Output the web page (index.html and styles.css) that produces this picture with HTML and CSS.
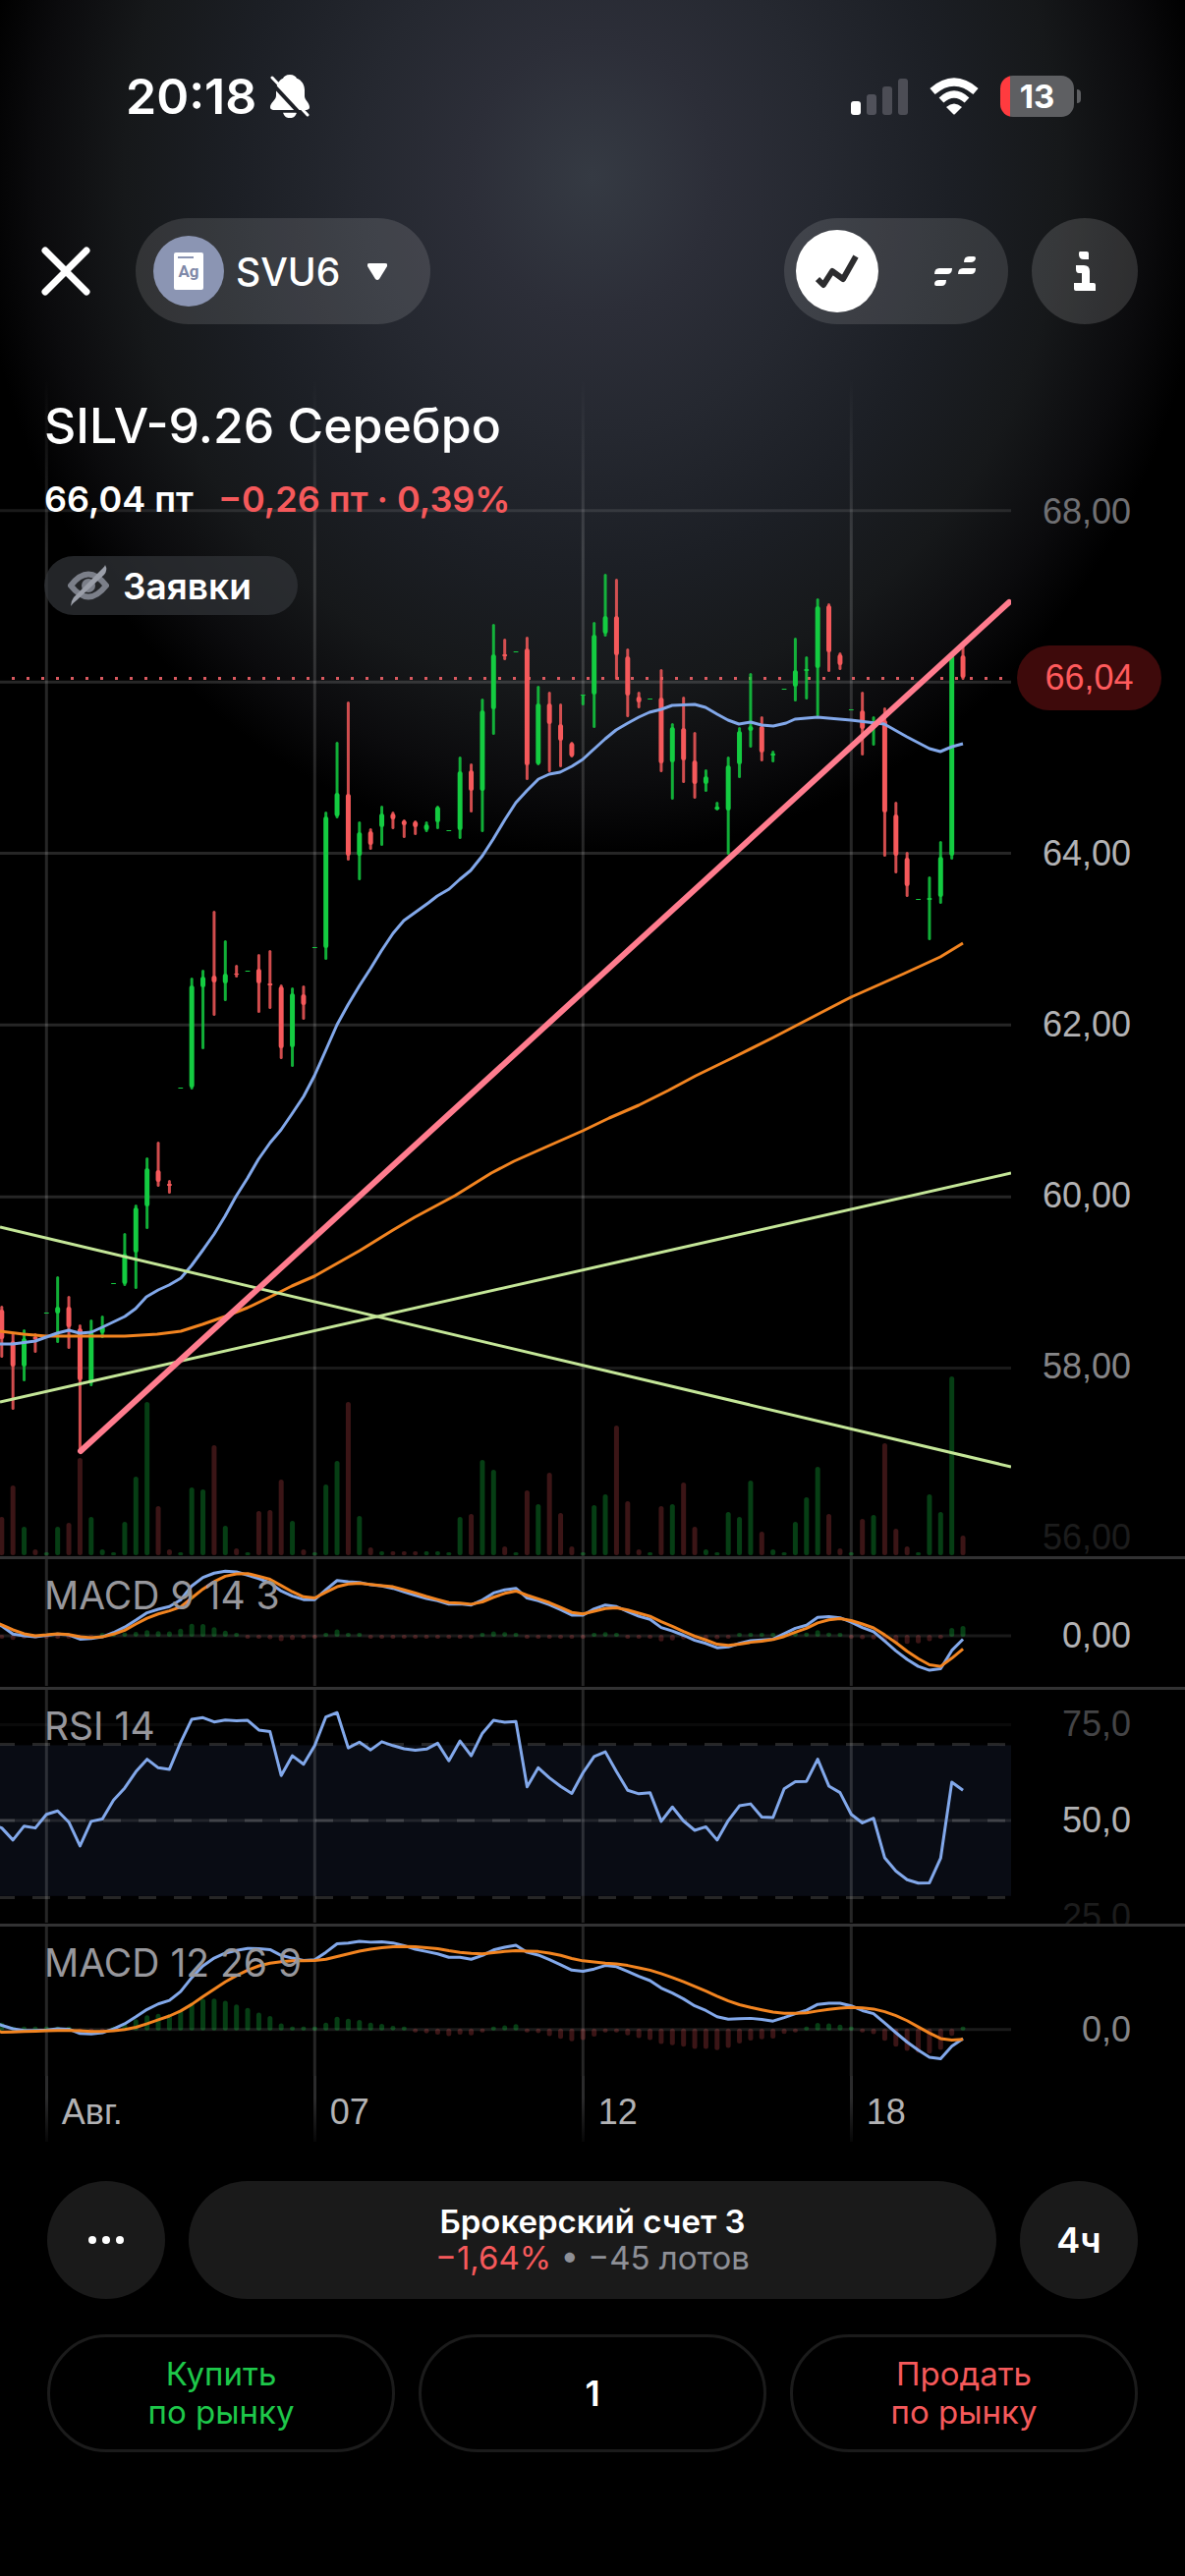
FILE: index.html
```html
<!DOCTYPE html>
<html lang="ru">
<head>
    <meta charset="UTF-8">
    <meta name="viewport" content="width=device-width, initial-scale=1.0">
    <title>SILV-9.26 Серебро</title>
    <link rel="stylesheet" href="styles.css">
</head>
<body>
    <div class="status-bar">
        <div class="status-left">
            <span class="time">20:18</span>
            <svg width="40" height="44" viewBox="0 0 40 44">
                <path d="M20 0c4 0 6 2 7 4 5 2 8 7 8 13v7c0 4 5 7 5 12 0 2-1 3-3 3H3c-2 0-3-1-3-3 0-5 6-8 6-13v-6C6 11 9 6 13 4c1-2 3-4 7-4zM13 42h14q-2 6-7 6t-7-6z" transform="scale(1 .92)" fill="#fff"/>
                <path d="M-1 6L38 48" stroke="#1d1f25" stroke-width="4"/>
                <path d="M2 3L38 41" stroke="#fff" stroke-width="3" stroke-linecap="round"/>
            </svg>
        </div>
        <div class="status-right">
            <svg width="58" height="38" viewBox="0 0 58 38">
                <rect x="0" y="24" width="10" height="14" rx="3" fill="#fff"/>
                <rect x="16" y="17" width="10" height="21" rx="3" fill="#50515a"/>
                <rect x="32" y="9" width="10" height="29" rx="3" fill="#4c4d55"/>
                <rect x="48" y="1" width="10" height="37" rx="3" fill="#4c4d55"/>
            </svg>
            <svg width="50" height="38" viewBox="0 0 50 38">
                <path d="M3 14Q25 -5 47 14" fill="none" stroke="#fff" stroke-width="8"/>
                <path d="M12 23Q25 11 38 23" fill="none" stroke="#fff" stroke-width="7"/>
                <path d="M17 30Q25 23 33 30L26 37q-1 1-2 0z" fill="#fff"/>
            </svg>
            <div class="battery"><span>13</span></div>
        </div>
    </div>

    <header class="header">
        <button class="close" aria-label="Закрыть">
            <svg width="50" height="50" viewBox="0 0 50 50">
                <path d="M4 4L46 46M46 4L4 46" stroke="#fff" stroke-width="7" stroke-linecap="round"/>
            </svg>
        </button>
        <button class="ticker">
            <span class="ticker-icon">
                <svg width="30" height="38" viewBox="0 0 30 38">
                    <rect width="30" height="38" rx="2" fill="#fff"/>
                    <rect x="4" y="4" width="16" height="2" fill="#8b95b3"/>
                    <text x="15" y="25" class="ag">Ag</text>
                </svg>
            </span>
            SVU6
            <svg class="caret" width="20" height="17" viewBox="0 0 20 17">
                <path d="M2 0h16q3 0 2 3l-8 13q-2 2-4 0L0 3Q-1 0 2 0z" fill="#fff"/>
            </svg>
        </button>
        <div class="switcher">
            <button class="switch active" aria-label="График">
                <svg width="44" height="36" viewBox="0 0 44 36">
                    <path d="M2 26L8 32L17 18L28 26L41 3" fill="none" stroke="#2c2c2e" stroke-width="6" stroke-linejoin="round"/>
                </svg>
            </button>
            <button class="switch" aria-label="Стакан">
                <svg width="42" height="30" viewBox="0 0 42 30" fill="#fff">
                    <path d="M35 0h5q2 0 2 2-1 4-5 4h-7q0-6 5-6z"/>
                    <path d="M5 12h13q0 6-5 6H0q0-6 5-6z"/>
                    <path d="M29 12h13q0 6-5 6H24q0-6 5-6z"/>
                    <path d="M5 24h7q0 6-5 6H2q-2 0-2-2 0-4 5-4z"/>
                </svg>
            </button>
        </div>
        <button class="info" aria-label="Информация">
            <svg width="22" height="40" viewBox="0 0 22 40" fill="#fff">
                <path d="M6 0h7q2 0 2 2v6h-5q-5 0-5-5V2q0-2 1-2z"/>
                <path d="M2 14h8q6 0 6 6v12h4q2 0 2 2v6H2q-2 0-2-2v-6h8V22H5q-3 0-3-4z"/>
            </svg>
        </button>
    </header>

    <main class="chart">
        <section class="pane pane-main">
            <svg class="plot" id="price" viewBox="0 380 1029 1204" preserveAspectRatio="none"></svg>
            <div class="summary">
                <h1>SILV-9.26 Серебро</h1>
                <p class="quote">66,04 пт <span class="down">−0,26 пт · 0,39%</span></p>
                <button class="orders">
                    <svg width="42" height="42" viewBox="0 0 42 42">
                        <path d="M3 21Q21 -2 39 21Q21 44 3 21z" fill="none" stroke="#7b7f89" stroke-width="6"/>
                        <circle cx="21" cy="21" r="7" fill="#7b7f89"/>
                        <path d="M3 42q0-5 3-9L36 3q2-2 2-3 3 5-1 10L9 36q-4 3-6 6z" fill="#9a9ea8"/>
                    </svg>
                    Заявки
                </button>
            </div>
            <div class="axis">
                <span class="dim">68,00</span>
                <span>66,00</span>
                <span>64,00</span>
                <span>62,00</span>
                <span>60,00</span>
                <span class="soft">58,00</span>
                <span class="faint">56,00</span>
            </div>
            <div class="badge">66,04</div>
        </section>
        <section class="pane pane-macd">
            <svg class="plot" id="macdFast" viewBox="0 1587 1029 130" preserveAspectRatio="none"></svg>
            <h2>MACD 9 14 3</h2>
            <div class="axis"><span>0,00</span></div>
        </section>
        <section class="pane pane-rsi">
            <svg class="plot" id="rsi" viewBox="0 1720 1029 238" preserveAspectRatio="none"></svg>
            <h2>RSI 14</h2>
            <div class="axis">
                <span class="dark">75,0</span>
                <span>50,0</span>
                <span class="faint">25,0</span>
            </div>
        </section>
        <section class="pane pane-macd-slow">
            <svg class="plot" id="macdSlow" viewBox="0 1961 1029 152" preserveAspectRatio="none"></svg>
            <h2>MACD 12 26 9</h2>
            <div class="axis"><span class="soft">0,0</span></div>
        </section>
        <div class="dates">
            <span>Авг.</span>
            <span>07</span>
            <span>12</span>
            <span>18</span>
        </div>
    </main>

    <footer class="footer">
        <div class="account-row">
            <button class="round" aria-label="Ещё">
                <svg width="36" height="8" viewBox="0 0 36 8" fill="#fff">
                    <circle cx="4" cy="4" r="4"/>
                    <circle cx="18" cy="4" r="4"/>
                    <circle cx="32" cy="4" r="4"/>
                </svg>
            </button>
            <button class="account">
                <b>Брокерский счет 3</b>
                <span class="position"><span class="down">−1,64%</span> • −45 лотов</span>
            </button>
            <button class="round">4ч</button>
        </div>
        <div class="trade-row">
            <button class="trade buy">Купить<br>по рынку</button>
            <input class="trade amount" type="text" inputmode="numeric" value="1" aria-label="Количество лотов">
            <button class="trade sell">Продать<br>по рынку</button>
        </div>
    </footer>
    <script src="script.js"></script>
</body>
</html>
```
FILE: styles.css
```css
* {
    box-sizing: border-box;
}

body {
    margin: 0;
    min-height: 100vh;
    background: #000 radial-gradient(ellipse 52% 690px at 50% 180px, #353a43 0%, #2c2e38 20%, #252830 38%, #1c1f25 58%, #16181a 76%, #0b0b0d 90%, #000 100%) no-repeat;
    color: #fff;
    font-family: Inter, "Liberation Sans", sans-serif;
}

button,
input {
    margin: 0;
    padding: 0;
    border: none;
    background: none;
    color: inherit;
    font-family: inherit;
    cursor: pointer;
}

h1,
h2,
p {
    margin: 0;
}

.down {
    color: #f5595b;
}

/* status bar */

.status-bar {
    display: flex;
    justify-content: space-between;
    align-items: center;
    height: 196px;
    padding: 0 106px 0 128px;
}

.status-left,
.status-right {
    display: flex;
    align-items: center;
}

.status-left {
    gap: 14px;
}

.status-right {
    gap: 22px;
}

.time {
    font-size: 50px;
    font-weight: 600;
}

.battery {
    position: relative;
    width: 75px;
    height: 42px;
    margin-right: 7px;
    border-radius: 13px;
    background: linear-gradient(to right, #ff3b3f 10px, #5e5f62 10px);
    font-size: 33px;
    font-weight: 700;
    line-height: 42px;
    text-align: center;
}

.battery::after {
    content: "";
    position: absolute;
    left: 78px;
    top: 14px;
    width: 4px;
    height: 14px;
    border-radius: 0 4px 4px 0;
    background: #5e5f62;
}

/* header */

.header {
    display: flex;
    align-items: center;
    height: 108px;
    margin: 26px 48px 50px 42px;
}

.close {
    height: 50px;
    margin-right: 46px;
}

.ticker {
    display: flex;
    align-items: center;
    width: 300px;
    height: 108px;
    margin-right: auto;
    padding: 0 18px;
    border-radius: 54px;
    background: rgba(255, 255, 255, 0.12);
    font-size: 39px;
    font-weight: 500;
}

.ticker-icon {
    display: flex;
    align-items: center;
    justify-content: center;
    width: 72px;
    height: 72px;
    margin-right: 12px;
    border-radius: 50%;
    background: #8b95b3;
}

.ag {
    font-family: Roboto, sans-serif;
    font-size: 17px;
    font-weight: 700;
    text-anchor: middle;
    fill: #7f89a8;
}

.caret {
    margin-left: 28px;
}

.switcher {
    display: flex;
    align-items: center;
    width: 228px;
    height: 108px;
    margin-right: 24px;
    padding: 0 12px;
    gap: 36px;
    border-radius: 54px;
    background: rgba(255, 255, 255, 0.12);
}

.switch,
.info {
    display: flex;
    align-items: center;
    justify-content: center;
    width: 84px;
    height: 84px;
    border-radius: 50%;
}

.switch.active {
    background: #fff;
}

.info {
    width: 108px;
    height: 108px;
    background: rgba(255, 255, 255, 0.14);
}

/* chart */

.pane {
    position: relative;
    display: grid;
    grid-template-columns: 1fr 177px;
    border-bottom: 3px solid #323233;
    overflow: hidden;
}

.pane-main {
    height: 1207px;
}

.pane-macd {
    height: 133px;
}

.pane-rsi {
    height: 241px;
}

.pane-macd-slow {
    height: 152px;
    border-bottom: none;
}

.plot,
.summary,
.pane h2 {
    grid-area: 1 / 1;
}

.plot {
    display: block;
    width: 100%;
    height: 100%;
    min-height: 0;
}

.summary {
    padding: 22px 0 0 45px;
}

.summary h1 {
    font-size: 50px;
    font-weight: 500;
    line-height: 62px;
}

.quote {
    margin-top: 22px;
    font-size: 36px;
    font-weight: 600;
    line-height: 44px;
}

.quote .down {
    margin-left: 16px;
}

.orders {
    display: flex;
    align-items: center;
    width: 258px;
    height: 60px;
    margin-top: 36px;
    padding-left: 24px;
    gap: 14px;
    border-radius: 30px;
    background: rgba(50, 52, 57, 0.7);
    font-size: 37px;
    font-weight: 600;
}

.pane h2 {
    padding: 17px 0 0 45px;
    color: #97979c;
    font-size: 39px;
    font-weight: 400;
    line-height: 40px;
}

.axis {
    grid-area: 1 / 2;
    display: flex;
    flex-direction: column;
    gap: 58px;
    min-height: 0;
    padding-right: 55px;
    color: #b2b2b4;
    font-family: "Liberation Sans", sans-serif;
    font-size: 36px;
    line-height: 40px;
    text-align: right;
}

.pane-main .axis {
    gap: 134px;
    padding-top: 121px;
}

.pane-macd .axis {
    padding-top: 58px;
}

.pane-rsi .axis {
    padding-top: 15px;
}

.pane-macd-slow .axis {
    padding-top: 85px;
}

.axis .dim {
    color: #707073;
}

.axis .soft {
    color: #858587;
}

.axis .dark {
    color: #444446;
}

.axis .faint {
    color: #1c1c1c;
}

.badge {
    position: absolute;
    right: 24px;
    top: 277px;
    width: 147px;
    height: 66px;
    border-radius: 33px;
    background: #3e0a0b;
    color: #ff5a5c;
    font-family: "Liberation Sans", sans-serif;
    font-size: 36px;
    line-height: 66px;
    text-align: center;
}

.dates {
    display: grid;
    grid-template-columns: 4.45% repeat(3, 26.53%) 1fr;
    height: 67px;
    margin-right: 177px;
    overflow: hidden;
    color: #b2b2b4;
    font-family: "Liberation Sans", sans-serif;
    font-size: 36px;
    line-height: 74px;
}

.dates::before {
    content: "";
}

.dates span {
    padding-left: 17px;
    background: linear-gradient(#2b2b2c 30%, #000) left / 3px 100% no-repeat;
}

/* chart series */

.grid {
    stroke: #fff;
    stroke-opacity: 0.15;
    stroke-width: 3;
}

.grid.weak {
    stroke-opacity: 0.1;
}

.grid.ghost {
    stroke-opacity: 0.04;
}

.up-bar {
    fill: #14cc41;
}

.down-bar {
    fill: #f5595b;
}

.wick {
    fill-opacity: 0.85;
}

.volume {
    fill-opacity: 0.3;
}

.volume.down-bar {
    fill-opacity: 0.24;
}

.line {
    fill: none;
    stroke-width: 3;
    stroke-linejoin: round;
}

.blue {
    stroke: #82a8ea;
}

.orange {
    stroke: #f28420;
}

.green {
    stroke: #c4e698;
}

.trend {
    stroke: #ff7c8e;
    stroke-width: 6;
    stroke-linecap: round;
}

.last-price {
    stroke: #d9595f;
    stroke-width: 3;
    stroke-dasharray: 3 12;
}

.band {
    fill: #090c14;
}

.level {
    stroke: #fff;
    stroke-opacity: 0.15;
    stroke-width: 3;
    stroke-dasharray: 18 18;
}

/* footer */

.footer {
    display: flex;
    flex-direction: column;
    gap: 36px;
    padding: 40px 48px 126px;
}

.account-row,
.trade-row {
    display: flex;
    gap: 24px;
}

.round {
    display: flex;
    align-items: center;
    justify-content: center;
    width: 120px;
    height: 120px;
    border-radius: 50%;
    background: #1a1a1a;
    font-size: 36px;
    font-weight: 600;
}

.account {
    display: flex;
    flex: 1;
    flex-direction: column;
    justify-content: center;
    height: 120px;
    border-radius: 60px;
    background: #1a1a1a;
    font-size: 33px;
    line-height: 37px;
}

.account b {
    font-weight: 600;
}

.position {
    color: #8e9097;
}

.trade {
    flex: 1;
    min-width: 0;
    height: 120px;
    border: 3px solid #1b1b1b;
    border-radius: 60px;
    font-size: 33px;
    line-height: 39px;
    text-align: center;
}

.buy {
    color: #1ec84a;
}

.sell {
    color: #f5595b;
}

.amount {
    font-size: 36px;
    font-weight: 600;
}
```
FILE: script.js
```js
const STEP = 11.375;   // distance between candles
const START = 1.8;     // x of the first candle
const PLOT_WIDTH = 1029;
const DAYS = [47.3, 320.3, 593.3, 866.3];
const PANE_TOP = 1570; // zero of the indicator series
const PANE_UNIT = 620 / 1568;

// direction, wick top, wick bottom, body top, body bottom
const candles = `
r 1329 1382 1333 1363;r 1357 1435 1365 1391;g 1353 1406 1362 1391;r 1357 1377 1361 1363;g 1336 1336 1336 1337
g 1299 1367 1330 1337;r 1319 1373 1330 1351;r 1348 1477 1352 1405;g 1343 1411 1356 1408;g 1339 1362 1350 1357
g 1306 1306 1306 1307;g 1255 1309 1276 1307;g 1226 1312 1229 1275;g 1178 1251 1189 1228;r 1162 1208 1191 1203
r 1201 1215 1205 1207;g 1107 1107 1107 1108;g 995 1109 1003 1107;g 987 1068 994 1005;r 927 1034 993 1000
g 957 1019 991 1001;r 982 995 991 992;g 988 988 988 989;r 971 1031 986 1001;r 967 1027 1001 1003
r 1002 1078 1004 1067;g 1005 1086 1011 1066;r 1003 1038 1012 1023;g 964 964 964 965;g 826 977 831 965
g 755 833 807 831;r 714 876 808 871;g 836 896 847 871;r 843 865 846 860;g 820 861 828 842
r 826 844 828 834;r 834 853 835 840;r 835 850 836 842;g 836 847 839 845;g 820 844 821 837
g 845 845 845 846;g 770 854 785 845;r 777 827 784 805;g 711 847 723 805;g 635 748 666 722
r 650 672 666 668;g 663 663 663 664;r 648 794 660 779;g 698 779 716 778;r 704 786 716 737
r 716 781 737 754;r 755 771 756 770;g 707 718 707 708;g 633 741 646 707;g 584 648 627 645
r 589 692 627 667;r 660 730 668 708;r 704 721 709 715;g 711 711 711 712;r 681 786 710 777
g 736 814 740 776;r 709 797 741 774;r 745 813 774 798;g 783 806 790 798;g 816 825 821 824
g 770 870 779 825;g 740 792 744 778;g 685 761 739 744;r 729 775 739 766;g 764 776 767 769
g 701 701 701 702;g 649 714 682 699;g 668 712 681 683;g 609 729 617 680;r 614 684 616 664
r 664 682 666 677;g 722 722 722 723;r 704 769 723 742;g 729 759 735 741;r 720 872 733 827
r 816 889 829 871;r 867 913 873 902;g 915 915 915 916;g 892 957 914 916;g 856 920 872 913
g 666 875 667 871;r 657 692 667 690`.trim().split(/[;\n]/).map(row => {
    const [dir, ...values] = row.split(' ');
    return [dir, ...values.map(Number)];
});

const volumes = [39, 71, 29, 6, 3, 29, 33, 99, 39, 6, 3, 34, 80, 156, 50, 6, 3, 69, 67, 112, 30, 7, 3, 45, 46, 77, 35, 6, 3,
    72, 96, 156, 40, 8, 4, 4, 4, 4, 4, 4, 3, 39, 42, 97, 87, 9, 3, 66, 52, 84, 43, 9, 3, 51, 62, 132, 55, 6, 3, 50, 52, 74,
    29, 6, 3, 44, 39, 76, 24, 6, 3, 34, 59, 90, 42, 7, 3, 37, 41, 114, 27, 9, 3, 62, 44, 182, 20];

const shortAverage = '0,1368 13,1368 36,1365 47,1361 58,1357 70,1354 81,1357 93,1356 104,1351 127,1340 138,1332 149,1320 161,1313 172,1308 184,1301 195,1288 206,1273 218,1256 229,1238 240,1218 252,1199 263,1180 275,1163 286,1150 297,1134 309,1116 320,1095 332,1068 343,1043 354,1023 366,1003 377,986 388,968 400,950 411,937 436,919 445,912 457,905 468,895 479,886 491,871 502,854 514,834 525,817 536,805 548,793 559,788 570,786 582,780 593,773 605,762 616,752 627,743 639,736 650,730 661,725 673,722 684,718 707,717 718,720 730,727 741,733 752,737 764,735 775,738 787,739 800,736 809,732 832,730 843,731 866,733 900,737 923,750 946,762 957,765 969,760 980,757';
const longAverage = '0,1355 24,1358 47,1360 127,1360 160,1358 184,1355 206,1348 229,1340 252,1331 275,1320 297,1309 320,1299 343,1286 366,1273 400,1252 422,1239 463,1217 500,1194 523,1182 559,1166 593,1151 620,1138 650,1125 680,1110 708,1095 745,1077 787,1056 835,1031 866,1015 893,1003 920,991 957,974 980,960';

const macdFast = {
    zero: 240,
    line: [215, 236, 240, 243, 239, 236, 238, 249, 247, 243, 232, 218, 200, 181, 172, 165, 148, 112, 90, 79, 74, 76, 84, 93, 104, 125, 138, 147, 147, 122, 98, 101, 103, 109, 112, 118, 127, 136, 144, 150, 159, 158, 161, 148, 130, 122, 118, 143, 150, 160, 173, 187, 187, 171, 161, 165, 178, 190, 198, 219, 228, 239, 252, 260, 271, 269, 260, 253, 251, 249, 235, 221, 213, 193, 191, 194, 205, 219, 230, 254, 279, 301, 319, 329, 325, 278, 249],
    signal: [212, 225, 235, 240, 238, 235, 237, 243, 245, 243, 236, 226, 210, 195, 184, 176, 166, 143, 120, 101, 87, 81, 80, 87, 95, 111, 127, 140, 143, 128, 114, 107, 105, 108, 111, 114, 122, 130, 139, 147, 155, 156, 159, 153, 141, 131, 125, 136, 145, 155, 167, 180, 184, 177, 170, 168, 174, 182, 190, 204, 216, 229, 241, 251, 262, 265, 262, 257, 254, 250, 242, 231, 221, 207, 199, 196, 201, 210, 220, 238, 258, 280, 299, 315, 319, 298, 274]
};

const macdSlow = {
    zero: 1254,
    line: [1243, 1252, 1256, 1256, 1255, 1252, 1253, 1264, 1265, 1262, 1252, 1239, 1221, 1202, 1188, 1179, 1156, 1120, 1090, 1070, 1057, 1050, 1045, 1046, 1048, 1063, 1070, 1076, 1074, 1055, 1033, 1031, 1027, 1029, 1028, 1031, 1038, 1047, 1053, 1059, 1068, 1068, 1073, 1063, 1049, 1042, 1037, 1055, 1062, 1074, 1087, 1101, 1104, 1098, 1089, 1092, 1104, 1117, 1128, 1147, 1160, 1175, 1193, 1205, 1221, 1227, 1226, 1225, 1228, 1232, 1223, 1213, 1204, 1189, 1186, 1186, 1193, 1205, 1213, 1237, 1262, 1286, 1307, 1325, 1329, 1297, 1277],
    signal: [1261, 1260, 1259, 1258, 1257, 1256, 1256, 1257, 1259, 1259, 1257, 1254, 1248, 1239, 1229, 1219, 1206, 1189, 1169, 1150, 1131, 1115, 1101, 1090, 1083, 1079, 1077, 1077, 1076, 1073, 1066, 1059, 1052, 1047, 1043, 1041, 1040, 1041, 1043, 1046, 1051, 1055, 1058, 1059, 1056, 1053, 1051, 1052, 1053, 1057, 1063, 1071, 1077, 1080, 1083, 1085, 1089, 1095, 1101, 1110, 1120, 1131, 1143, 1155, 1168, 1180, 1190, 1197, 1203, 1209, 1212, 1212, 1211, 1206, 1202, 1199, 1197, 1198, 1201, 1208, 1218, 1231, 1247, 1263, 1277, 1281, 1279]
};

const rsi = [735, 766, 730, 735, 700, 691, 720, 781, 718, 712, 663, 632, 590, 558, 580, 584, 515, 455, 451, 462, 457, 459, 458, 483, 487, 600, 549, 571, 523, 449, 438, 529, 514, 534, 513, 523, 531, 535, 532, 517, 562, 511, 549, 491, 458, 463, 461, 629, 580, 606, 628, 646, 593, 551, 539, 590, 638, 647, 644, 718, 681, 717, 741, 732, 766, 716, 678, 673, 707, 708, 634, 616, 615, 558, 627, 644, 700, 722, 710, 812, 846, 868, 877, 876, 813, 617, 638];

const xAt = i => START + i * STEP;
const paneY = value => PANE_TOP + value * PANE_UNIT;

function hLine(y, cls) {
    return `<line class="${cls}" x1="0" x2="${PLOT_WIDTH}" y1="${y}" y2="${y}"/>`;
}

function bar(i, top, bottom, width, cls) {
    return `<rect class="${cls}" x="${xAt(i) - width / 2}" y="${top}" width="${width}" height="${bottom - top}" rx="${Math.min(width, bottom - top) / 2}"/>`;
}

function polyline(points, cls) {
    return `<polyline class="line ${cls}" points="${points}"/>`;
}

function series(values, cls) {
    // start one pixel outside so the line runs off the left edge
    const points = values.map((v, i) => `${xAt(i)},${paneY(v)}`);
    points.unshift(`-1,${paneY(values[0]) - 1}`);
    return polyline(points.join(' '), cls);
}

function dayLines(top, bottom) {
    return DAYS.map(x => `<line class="grid" x1="${x}" x2="${x}" y1="${top}" y2="${bottom}"/>`).join('');
}

function drawPrice() {
    // day lines fade in under the header
    let out = '<defs><linearGradient id="fade" x2="0" y2="1"><stop offset="0" stop-color="#fff" stop-opacity="0"/><stop offset="1" stop-color="#fff" stop-opacity="0.15"/></linearGradient></defs>';
    DAYS.forEach(x => {
        out += `<rect x="${x - 1.5}" y="385" width="3" height="175" fill="url(#fade)"/>`;
    });
    out += dayLines(560, 1584);
    out += hLine(519.7, 'grid weak') + [694.3, 868.5, 1043.3, 1218.3].map(y => hLine(y, 'grid')).join('') + hLine(1392.5, 'grid weak');
    out += `<line class="last-price" x1="12" x2="${PLOT_WIDTH}" y1="690.5" y2="690.5"/>`;

    volumes.forEach((height, i) => {
        out += bar(i, 1583 - height, 1583, 5, 'volume ' + (candles[i][0] === 'g' ? 'up-bar' : 'down-bar'));
    });
    candles.forEach(([dir, high, low, top, bottom], i) => {
        const cls = dir === 'g' ? 'up-bar' : 'down-bar';
        if (low > high) {
            out += bar(i, high, low, 3, cls + ' wick');
        }
        out += bar(i, top, bottom, 5, cls);
    });

    out += polyline(longAverage, 'orange') + polyline(shortAverage, 'blue');
    out += polyline('0,1249 1029,1493', 'green') + polyline('0,1427 1029,1194', 'green');
    out += polyline('82,1477 1027,613', 'trend');
    document.getElementById('price').innerHTML = out;
}

function drawMacd(id, data, top, bottom) {
    const zero = paneY(data.zero);
    let out = dayLines(top, bottom) + hLine(zero, 'grid weak');
    data.line.forEach((value, i) => {
        const diff = (data.signal[i] - value) * PANE_UNIT;
        const size = Math.max(Math.abs(diff), 3);
        out += diff >= 0
            ? bar(i, zero - size, zero + 1, 5, 'volume up-bar')
            : bar(i, zero - 1, zero + size, 5, 'volume down-bar');
    });
    out += series(data.line, 'blue') + series(data.signal, 'orange');
    document.getElementById(id).innerHTML = out;
}

function drawRsi() {
    const high = paneY(522);
    const low = paneY(910);
    let out = `<rect class="band" x="0" y="${high}" width="${PLOT_WIDTH}" height="${low - high}"/>`;
    out += dayLines(1720, 1957) + hLine(paneY(469), 'grid ghost') + hLine(paneY(716), 'grid weak');
    [520, 716, 914].forEach(v => {
        out += `<line class="level" x1="-3" x2="${PLOT_WIDTH}" y1="${paneY(v)}" y2="${paneY(v)}"/>`;
    });
    out += series(rsi, 'blue');
    document.getElementById('rsi').innerHTML = out;
}

drawPrice();
drawMacd('macdFast', macdFast, 1587, 1716);
drawRsi();
drawMacd('macdSlow', macdSlow, 1961, 2113);
```
